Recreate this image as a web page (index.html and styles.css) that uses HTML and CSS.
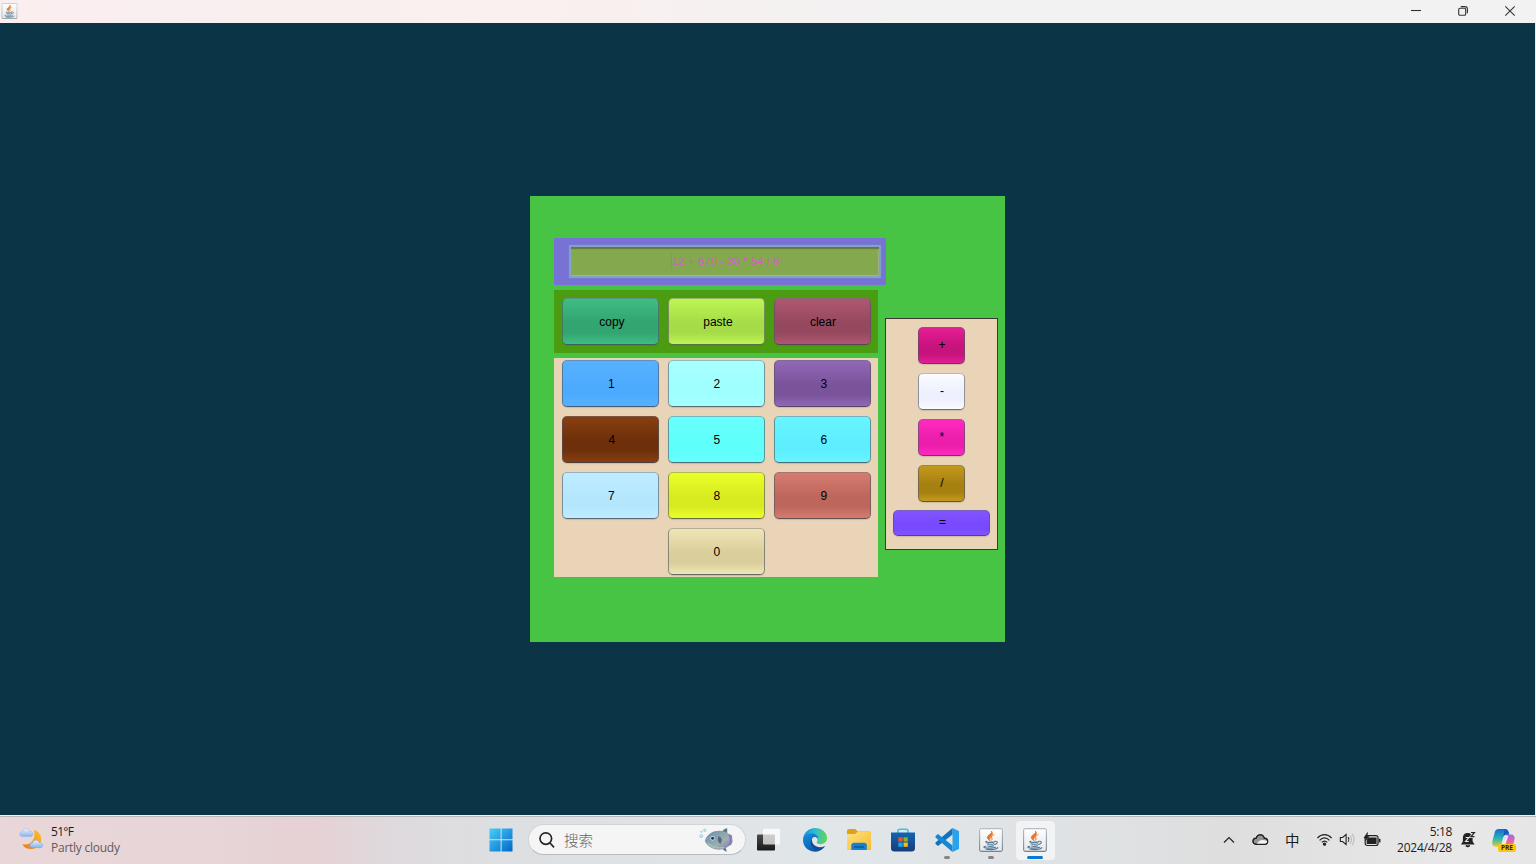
FILE: index.html
```html
<!DOCTYPE html>
<html lang="zh-CN">
<head>
<meta charset="utf-8">
<title>Calculator</title>
<link rel="stylesheet" href="styles.css">
</head>
<body>
<svg class="defs" width="0" height="0" aria-hidden="true">
  <defs>
    <linearGradient id="tile" x1="0" y1="0" x2="0" y2="1"><stop offset="0" stop-color="#fff"/><stop offset="1" stop-color="#e3e6ea"/></linearGradient>
    <linearGradient id="tileEdge" x1="0" y1="0" x2="0" y2="1"><stop offset="0" stop-color="#b4bdc6"/><stop offset="1" stop-color="#75838f"/></linearGradient>
    <symbol id="java" viewBox="0 0 24 24">
      <rect x=".6" y=".6" width="22.8" height="22.8" rx="1.8" fill="url(#tile)" stroke="url(#tileEdge)" stroke-width="1.1"/>
      <path d="M12.400 3c1.600 2.500-4.200 4-4.200 6.400 0 1.700 2 2.300 2.800 3.400-2.100-2.900 5-5.500 1.400-9.800z" fill="#e8762d" stroke="#e8762d" stroke-width=".8"/>
      <path d="M15.600 6.600c-3.200 1-4.500 2-3.400 3.500.7.900.5 1.700-.3 2.500 2.600-1.400 1.100-2.500.9-3.400-.2-1 1-1.800 2.800-2.600z" fill="#f0903f" stroke="#f0903f" stroke-width=".5"/>
      <g fill="none" stroke="#527894" stroke-width="1.100" stroke-linecap="round">
        <path d="M7.800 13.200c-1.700.5-1.300 1 .7 1.100 2.200.2 4.900 0 6.900-.4M8 15.800c1.900.7 5 .5 7 0M8.700 17.900c1.800.6 4 .5 5.800 0M15.800 13.300c3.500-.7 3.200 2.300 0 3.200"/>
        <path d="M6.800 18.300c-3 .5-2.500 1.400.9 1.700 3.200.3 7 .1 8.900-.7M7.200 21.300c4 .5 10 .3 11.600-1.600"/>
      </g>
    </symbol>
  </defs>
</svg>

<header class="titlebar">
  <svg class="app-icon" viewBox="0 0 24 24"><use href="#java"/></svg>
  <div class="window-buttons">
    <svg viewBox="0 0 12 12"><path d="M1 5.500h10"/></svg>
    <svg viewBox="0 0 12 12"><rect x="1.700" y="3.300" width="7" height="7" rx="1.300"/><path d="M3.800 1.600h4.200q2.400 0 2.400 2.400v4.200"/></svg>
    <svg viewBox="0 0 12 12"><path d="M1.300 1.300l9.400 9.400M10.700 1.300l-9.400 9.400"/></svg>
  </div>
</header>

<main class="desktop">
  <section class="calculator">
    <div class="screen"><div class="display"><span class="caret"></span><span>12 + 879 - 30 * 54 / 6</span></div></div>
    <div class="left">
      <div class="keys actions">
        <button class="key copy">copy</button><button class="key paste">paste</button><button class="key clear">clear</button>
      </div>
      <div class="keys digits">
        <button class="key k1">1</button><button class="key k2">2</button><button class="key k3">3</button>
        <button class="key k4">4</button><button class="key k5">5</button><button class="key k6">6</button>
        <button class="key k7">7</button><button class="key k8">8</button><button class="key k9">9</button>
        <button class="key k0">0</button>
      </div>
    </div>
    <div class="operators">
      <button class="key op plus">+</button><button class="key op minus">-</button><button class="key op times">*</button><button class="key op divide">/</button><button class="key equals">=</button>
    </div>
  </section>
</main>

<footer class="taskbar">
  <div class="weather">
    <svg width="25" height="24" viewBox="0 0 26 24">
      <defs>
        <linearGradient id="moon" x1="1" y1="0" x2="0" y2="1"><stop offset="0" stop-color="#fbc52c"/><stop offset="1" stop-color="#ee761b"/></linearGradient>
        <linearGradient id="cloud" x1="0" y1="0" x2="0" y2="1"><stop offset="0" stop-color="#eaf3ff"/><stop offset="1" stop-color="#86b1ed"/></linearGradient>
      </defs>
      <path d="M15.500 2.300c10 3 10.500 16 .5 19.500-5 1.600-10-.2-12.500-4.200C13 19 18 11.500 15.500 2.300z" fill="url(#moon)"/>
      <path d="M4 9.500c-4.200 0-4.300-5-.5-5.200C4.200.600 9.800-.1 11 3.900c4.600 0 4.600 5.600.5 5.600z" fill="url(#cloud)" stroke="#8cb2e8" stroke-width=".5"/>
      <path d="M14.500 21c-4.200 0-4.200-4.600-.5-4.900.8-3.500 6-4 7.200-.2 4.700 0 4.500 5.100.6 5.100z" fill="url(#cloud)" stroke="#79a4e4" stroke-width=".5"/>
    </svg>
    <div class="weather-text"><span>51°F</span><span class="muted">Partly cloudy</span></div>
  </div>

  <nav class="dock">
    <div class="slot">
      <svg viewBox="0 0 24 24"><defs><linearGradient id="win" x1="0" y1="0" x2="1" y2="1"><stop offset="0" stop-color="#47cefb"/><stop offset="1" stop-color="#0068c9"/></linearGradient></defs><path d="M1 .5h10.600v10.700H.500V1zM12.600.500h10.900v10.700H12.600zM.500 12.200h11.100v11.200H.500zM12.600 12.200h10.900v11.200H12.600z" fill="url(#win)"/></svg>
    </div>
    <div class="search">
      <svg class="lens" viewBox="0 0 16 16"><circle cx="6.800" cy="6.600" r="5.800"/><path d="M11 11l4 4.300"/></svg>
      <span>搜索</span>
      <svg class="fish" viewBox="0 0 36 26">
        <defs><linearGradient id="fish" x1="0" y1="0" x2="1" y2="1"><stop offset="0" stop-color="#6d8aad"/><stop offset=".6" stop-color="#9cb0ae"/><stop offset="1" stop-color="#8070b2"/></linearGradient></defs>
        <path d="M23 5Q26 1 29 1v7zM25 20q3 0 3.500 5-4-1-5-5z" fill="#557992"/>
        <path d="M6 14C9 2 25 1 31 7q4 0 3 4 2 4-2 7C26 26 10 24 6 14z" fill="url(#fish)"/>
        <path d="M30 7q3 6 0 12q4-.5 4-4l-1-2 1-3q-1-3-4-3z" fill="#8978bd"/>
        <path d="M20 9q6 3 2 8-4-2-2-8z" fill="#516d82"/><circle cx="14" cy="11.300" r="2.400" fill="#bdd7ea"/><circle cx="14" cy="11.300" r="1.500" fill="#122c66"/>
        <path d="M9 16.500q8 6 17 4" fill="none" stroke="#a9c2bd" stroke-width="1.300"/>
        <g fill="#c6eaf2" stroke="#82c3da" stroke-width=".6"><circle cx="2.300" cy="9" r="1.600"/><circle cx="6" cy="3" r="1.300"/><circle cx="2.500" cy="4.500" r=".7"/></g>
      </svg>
    </div>
    <div class="slot taskview">
      <svg viewBox="0 0 24 24"><defs><linearGradient id="dark" x1="0" y1="0" x2="0" y2="1"><stop offset="0" stop-color="#4b4b4b"/><stop offset="1" stop-color="#191919"/></linearGradient></defs><rect x="1" y="6.500" width="18" height="16" rx="1" fill="url(#dark)"/><rect x="7" y=".700" width="17" height="15.800" rx="1" fill="#fff" opacity=".72"/></svg>
    </div>
    <div class="slot">
      <svg viewBox="0 0 24 24">
        <defs><linearGradient id="edgeTop" x1="0" y1=".4" x2="1" y2=".5"><stop offset="0" stop-color="#158ddc"/><stop offset=".5" stop-color="#31bed3"/><stop offset="1" stop-color="#65d454"/></linearGradient><linearGradient id="edgeBody" x1="0" y1="0" x2=".6" y2="1"><stop offset="0" stop-color="#168fe0"/><stop offset="1" stop-color="#0657ae"/></linearGradient></defs>
        <path d="M0 12C0 5 5.600 0 12 0c7 0 12 4.500 12 10 0 4-3 6.200-6.700 6.200-3.300 0-4.100-1.300-3.200-2.600 1.300-2.300-.3-5.600-4.800-5.600C4 8 0 11 0 12z" fill="url(#edgeTop)"/>
        <path d="M0 12C.500 8 4.500 5.600 9 5.600c4 0 6 2.700 6 5-2-3-6.500-2-6.500 2.400 0 5.500 6.500 8.800 12.500 5.700C18 24 11 25 6 22c-4-2-6-6-6-10z" fill="url(#edgeBody)"/>
        <path d="M9 10.500c-4 5 1 13.500 9 11.200q2.500-1 4.300-3.700C15 21.500 8 17 9 10.500z" fill="#124d92"/>
      </svg>
    </div>
    <div class="slot">
      <svg viewBox="0 0 24 24">
        <defs><linearGradient id="folder" x1="0" y1="0" x2="1" y2="1"><stop offset="0" stop-color="#ffe183"/><stop offset="1" stop-color="#f7bb2c"/></linearGradient></defs>
        <path d="M0 7V3q0-2 2-2h6l3 2.500h11q2 0 2 2V9z" fill="#dda21c"/><path d="M0 6h8l3-2.500h11q2 0 2 2V22H0z" fill="url(#folder)"/><path d="M4.300 22v-4.500q0-2.800 2.800-2.800H17q2.800 0 2.800 2.800V22z" fill="#187fd0"/><path d="M7 19h10" stroke="#075693" stroke-width="1.300"/>
      </svg>
    </div>
    <div class="slot">
      <svg viewBox="0 0 24 24">
        <defs><linearGradient id="store" x1="0" y1="0" x2="0" y2="1"><stop offset="0" stop-color="#1266b2"/><stop offset="1" stop-color="#183c77"/></linearGradient></defs>
        <path d="M7 6V3q0-1.700 1.700-1.700h6.600Q17 1.300 17 3v3" fill="none" stroke="#41bfed" stroke-width="1.600"/><path d="M0 4.500h24V20q0 3.500-3.500 3.500h-17Q0 23.500 0 20z" fill="url(#store)"/>
        <path d="M7.300 9.300h4.300v4.300H7.300z" fill="#f25325"/><path d="M12.500 9.300h4.300v4.300h-4.300z" fill="#80b91b"/><path d="M7.300 14.500h4.300v4.300H7.300z" fill="#16a6ec"/><path d="M12.500 14.500h4.300v4.300h-4.300z" fill="#fbb914"/>
      </svg>
    </div>
    <div class="slot running">
      <svg viewBox="0 0 24 24"><path d="M17.500 0L24 3v18l-6.500 3z" fill="#2ba3ec"/><path d="M17.500 0v6.500L3 18 .500 16v-1.500z" fill="#1073bb"/><path d="M.500 9.500v-1.500L3 6l14.500 11.500V24z" fill="#1687d0"/></svg>
    </div>
    <div class="slot running"><svg viewBox="0 0 24 24"><use href="#java"/></svg></div>
    <div class="slot active"><svg viewBox="0 0 24 24"><use href="#java"/></svg></div>
  </nav>

  <div class="tray">
    <svg class="t-chevron" viewBox="0 0 12 12"><path d="M1 8.500l5-5 5 5"/></svg>
    <svg class="t-cloud" viewBox="0 0 18 14"><path d="M4.600 12.300C-.4 12.300-.2 5.600 4.400 5.500 5.900.500 12 .900 13 5.500c4.800 0 5 6.800.4 6.800z" fill="#949494"/><path d="M5 12c2-4 5-5.500 11-3.500.7 2.200-.7 3.500-2.500 3.500z" fill="#f3f3f3" stroke="none"/><path d="M4.600 12.300C-.4 12.300-.2 5.600 4.400 5.500 5.900.500 12 .900 13 5.500c4.800 0 5 6.800.4 6.800z"/></svg>
    <span class="ime">中</span>
    <svg class="t-wifi" viewBox="0 0 18 14"><path d="M1.300 5.500c4.500-5 10.900-5 15.400 0M3.700 7.900c3.200-3.500 7.400-3.500 10.600 0M6 10.200c1.900-2 4.100-2 6 0"/><circle cx="9" cy="12" r="1.200" fill="#222"/></svg>
    <svg class="t-volume" viewBox="0 0 18 14"><path d="M1.300 4.800h2.500L7.500 1.500v11L3.800 9.200H1.300zM9.700 4.500q1.700 2.500 0 5"/><path d="M11.800 2.800q3 4.200 0 8.400M14 1q4.400 6 0 12" stroke="#bcbcbc"/></svg>
    <svg class="t-battery" viewBox="0 0 18 14"><rect x="2.200" y="2.700" width="12.800" height="9.800" rx="2"/><path d="M5.500 5h7.500v5.300H4.300V7.500z" fill="#222"/><path d="M16.600 5.800v3.600" stroke-width="1.700"/><path d="M4.500 -.5L1 5h2.200L2.200 8 6 3.500H4z" fill="#222" stroke-width=".6"/></svg>
    <div class="clock"><span>5:18</span><span>2024/4/28</span></div>
    <svg class="t-bell" viewBox="0 0 15 17"><path d="M1 13h11.500l-1.500-2.500V7c0-6-8.500-6-8.500 0v3.500z" fill="#222"/><path d="M4.800 14.500q2 2 4 0" fill="#222"/><path d="M4.600 6.500h3.200L4.600 10.500h3.200" stroke="#e9e9e9"/><path d="M10 1.500h3.400L10 5.700h3.400" stroke="#e4e4e4" stroke-width="2.600"/><path d="M10 1.500h3.400L10 5.700h3.400"/></svg>
    <div class="copilot">
      <svg viewBox="0 0 24 24">
        <defs><linearGradient id="cpA" x1="0" y1="0" x2="0" y2="1"><stop offset="0" stop-color="#1768d9"/><stop offset=".55" stop-color="#2ab7b0"/><stop offset="1" stop-color="#e8cb32"/></linearGradient><linearGradient id="cpB" x1="0" y1="0" x2="0" y2="1"><stop offset="0" stop-color="#a765ee"/><stop offset=".5" stop-color="#eb669e"/><stop offset="1" stop-color="#ff9651"/></linearGradient></defs>
        <path d="M7 1h7q2.500 0 3.300 3l.7 2.700h-3q-2.500 0-3.300 3L9.800 17q-.7 2.500-3 2.500H4q-4.400 0-3.700-5.500L3 4q1-3 4-3z" fill="url(#cpA)"/><path d="M17 6.700h2.500q4.700 0 4 5L21.500 19q-1 3.500-4.500 3.500h-6q-3 0-2-3.500 2 0 3-3l2-6q1-3.300 3-3.300z" fill="url(#cpB)"/><path d="M13 1q3 0 4 3l1 2.700h-3q-2 0-3 2.500z" fill="#175ac7"/><path d="M15 8h2l-3 9h-3z" fill="#f5eef3"/>
      </svg>
      <span>PRE</span>
    </div>
  </div>
</footer>
</body>
</html>
```

FILE: styles.css
```css
* { box-sizing: border-box; }
body {
  margin: 0;
  width: 1536px;
  height: 864px;
  display: flex;
  flex-direction: column;
  overflow: hidden;
  background: #e9eff3;
  font-family: "Liberation Sans", Arial, "Noto Sans CJK SC", sans-serif;
}
svg { display: block; flex: none; overflow: visible; }
.defs { position: absolute; }

.titlebar {
  height: 23px;
  flex: none;
  display: flex;
  align-items: center;
  justify-content: space-between;
  padding: 0 20px 1px 1px;
  background: linear-gradient(90deg, #faeeef 0, #f9f0ef 35%, #f2f2f2 60%, #f2f2f2);
}
.app-icon { width: 17px; height: 16px; }
.window-buttons { display: flex; gap: 35px; }
.window-buttons svg { width: 12px; height: 12px; fill: none; stroke: #333; stroke-width: 1.1; }

.desktop {
  height: 792px;
  width: 1535px;
  flex: none;
  padding: 173px 0 0 529.5px;
  background: #0b3446;
}
.calculator {
  width: 475.5px;
  height: 446px;
  padding: 42px 0 0 24.900px;
  display: grid;
  grid-template-columns: 324px 113px;
  grid-template-rows: 47px 287px;
  column-gap: 6.500px;
  row-gap: 5px;
  align-content: start;
  background: #48c445;
}
.screen {
  grid-column: 1 / 3;
  width: 332px;
  padding: 7px 5px 7px 15px;
  background: #7972d5;
}
.display {
  height: 33px;
  display: flex;
  align-items: center;
  justify-content: center;
  border: 2px solid #80a2c3;
  background: #84a84d;
  box-shadow: 0 0 1px #7595d0, inset 0 2px 1px #66763c, inset -1px -1px 1px #a6b49a, inset 1px 0 #8eaa83;
  color: #d45dc4;
  font-size: 11.500px;
  line-height: 16px;
  white-space: pre;
  padding-bottom: 1px;
}
.caret { width: 1px; height: 17px; background: #bb719f; }
.left { display: flex; flex-direction: column; gap: 5px; }
.keys {
  display: grid;
  grid-template-columns: repeat(3, 96px);
  gap: 10px;
  padding-left: 8px;
}
.actions { height: 63px; padding-top: 8px; background: #4b9c10; }
.digits { height: 219px; padding-top: 2px; align-content: start; background: #ead4b7; }

.key {
  --c: #ccc;
  --d: #bbb;
  width: 97px;
  height: 47px;
  margin: 0 0 -1px;
  padding: 0;
  border: 1px solid rgba(85, 87, 99, .62);
  border-top-color: rgba(110, 112, 122, .48);
  border-bottom-color: rgba(61, 64, 75, .75);
  border-radius: 5px;
  background: linear-gradient(var(--c), var(--d) 52%, var(--d) 75%, var(--c));
  box-shadow: 0 1px 1px rgba(70, 75, 80, .18);
  color: #000;
  font: 12px/14px "Liberation Sans", Arial, sans-serif;
}
.copy { --c: #3fbd83; --d: #32a570; padding-left: 2px; }
.paste { --c: #bdf653; --d: #a6dc48; padding-left: 2px; }
.clear { --c: #ad5871; --d: #96495e; }
.k1 { --c: #58b1ff; --d: #4dabff; padding-left: 1px; }
.k2 { --c: #a8ffff; --d: #9fffff; }
.k3 { --c: #9267b7; --d: #7a549b; padding-left: 2px; }
.k4 { --c: #883f0f; --d: #6d300a; padding-left: 2px; }
.k5 { --c: #68ffff; --d: #5ffffb; }
.k6 { --c: #69f4ff; --d: #5eefff; padding-left: 2px; }
.k7 { --c: #bfecff; --d: #b4e7fe; padding-left: 1px; }
.k8 { --c: #eaff28; --d: #d7eb20; }
.k9 { --c: #d77b70; --d: #bd675c; padding-left: 2px; }
.k0 { --c: #f0e5b5; --d: #d9ce9c; grid-column: 2; }

.operators {
  margin-top: 27.500px;
  width: 113px;
  height: 232.500px;
  padding: 8px 0 0 7.500px;
  display: flex;
  flex-direction: column;
  align-items: flex-start;
  border: 1px solid #3c3836;
  background: #ead4b7;
}
.operators .op { width: 47px; height: 37px; margin: 0 0 9px 25px; flex: none; }
.operators .equals { width: 97px; height: 26px; margin: -1px 0 0; flex: none; padding: 0 0 2px 1px; }
.plus { --c: #e61d94; --d: #c7147d; }
.minus { --c: #fafcff; --d: #eef0fe; }
.times { --c: #ff2ac0; --d: #ec1fac; }
.divide { --c: #c39a1d; --d: #a68011; }
.equals { --c: #8355ff; --d: #784aff; }

.taskbar {
  height: 49px;
  flex: none;
  display: flex;
  align-items: stretch;
  border-top: 1px solid #edf3f6;
  box-shadow: inset 0 1px #b8b8bb;
  background: linear-gradient(90deg, #e8d6d8 0, #e7d5d8 14%, #e6d1d4 20%, #dedadd 26%, #dde0e2 34%, #e1e6e9 55%, #dfe2e4 70%, #dedede 80%, #e8e8e8 95%, #e6e6e6);
  color: #1c1c1c;
  font-family: "Open Sans", "Noto Sans", "Noto Sans CJK SC", sans-serif;
}
.weather { width: 479px; display: flex; padding: 10px 0 0 19px; gap: 7px; }
.weather-text { display: flex; flex-direction: column; font-size: 12px; line-height: 16px; letter-spacing: -.25px; }
.weather-text span:first-child { margin-top: -2px; letter-spacing: -.7px; }
.weather svg { margin-top: 1px; }
.muted { color: #625b5d; }

.dock { display: flex; align-items: center; }
.slot { width: 44px; height: 48px; display: flex; align-items: center; justify-content: center; position: relative; }
.slot > svg { width: 24px; height: 24px; }
.taskview { margin-right: 2.500px; }
.search {
  width: 218px;
  height: 31px;
  margin: 0 0 1px 5px;
  padding: 0 11px 0 10px;
  display: flex;
  align-items: center;
  border: 1px solid #d2d4d6;
  border-bottom-color: #b8babc;
  border-radius: 16px;
  background: #f5f5f5;
  color: #5f5f5f;
  font-family: "Noto Sans CJK SC", sans-serif;
  font-size: 14.500px;
  font-weight: 300;
}
.search span { margin-left: 9px; }
.lens { width: 16px; height: 16px; fill: none; stroke: #252525; stroke-width: 1.7; }
.fish { width: 35px; height: 26px; margin-left: auto; }
.running::after, .active::after {
  content: "";
  position: absolute;
  bottom: 5px;
  width: 6px;
  height: 3px;
  border-radius: 2px;
  background: #858585;
}
.active::before {
  content: "";
  position: absolute;
  inset: 5px 2px 4px 3px;
  border-radius: 4px;
  background: #f1f3f5;
}
.active > svg { position: relative; }
.active::after { width: 16px; background: #0878d4; }

.tray { margin-left: auto; width: 323px; display: flex; align-items: center; padding-bottom: 1px; }
.tray > svg { fill: none; stroke: #222; stroke-width: 1.2; }
.tray .t-chevron { width: 12px; height: 12px; margin-left: 10px; }
.tray .t-cloud { width: 17px; height: 13px; margin-left: 17px; }
.ime { width: 16px; margin-left: 16px; font: 14.500px/20px "Noto Sans CJK SC", sans-serif; }
.tray .t-wifi { width: 17px; height: 13px; margin-left: 15px; }
.tray .t-volume { width: 17px; height: 13px; margin-left: 6px; }
.tray .t-battery { width: 18px; height: 14px; margin-left: 7px; }
.clock { width: 71px; display: flex; flex-direction: column; align-items: flex-end; font-size: 12px; line-height: 16px; letter-spacing: -.2px; }
.clock span:first-child { letter-spacing: -.4px; }
.tray .t-bell { width: 15px; height: 17px; margin-left: 9px; }
.copilot { width: 24px; height: 24px; margin-left: 16px; position: relative; }
.copilot svg { width: 23px; height: 23px; }
.copilot span {
  position: absolute;
  left: 6px;
  top: 16px;
  width: 18px;
  height: 8px;
  border-radius: 2px;
  background: #fcc314;
  color: #33270a;
  font: 700 6.500px/8px "Open Sans", sans-serif;
  text-align: center;
}
```
